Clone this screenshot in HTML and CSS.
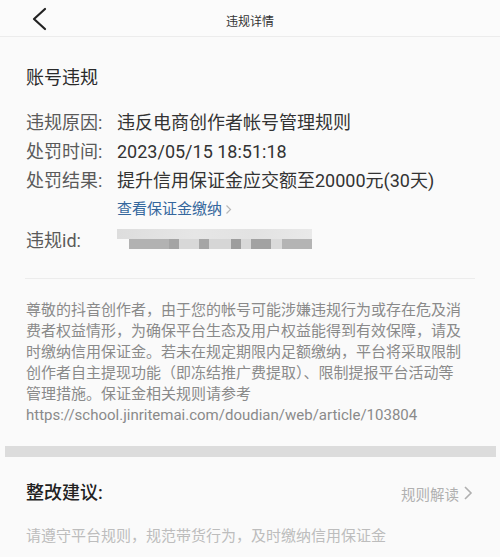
FILE: index.html
```html
<!DOCTYPE html>
<html lang="zh-CN">
<head>
<meta charset="utf-8">
<title>违规详情</title>
<link rel="stylesheet" href="styles.css">
</head>
<body>
<header class="topbar">
  <div class="back">
    <svg width="16" height="24" viewBox="0 0 16 24"><polyline points="13,2 2,12 13,22" fill="none" stroke="#222" stroke-width="2.2" stroke-linecap="round" stroke-linejoin="round"/></svg>
  </div>
  <div class="topbar-title">违规详情</div>
  <div></div>
</header>

<section class="violation">
  <h1 class="sec-title">账号违规</h1>
  <div class="rows">
    <div class="label">违规原因:</div>
    <div class="value">违反电商创作者帐号管理规则</div>
    <div class="label">处罚时间:</div>
    <div class="value">2023/05/15 18:51:18</div>
    <div class="label">处罚结果:</div>
    <div class="value">提升信用保证金应交额至20000元(30天)</div>
    <div></div>
    <div class="link">查看保证金缴纳 <svg width="7" height="11" viewBox="0 0 7 11"><polyline points="1.5,1.5 5.5,5.5 1.5,9.5" fill="none" stroke="#b8b8b8" stroke-width="1.2"/></svg></div>
    <div class="label id-label">违规id:</div>
    <div class="value id-value"><div class="blur"></div></div>
  </div>
  <div class="divider"></div>
  <p class="notice">尊敬的抖音创作者，由于您的帐号可能涉嫌违规行为或存在危及消<br>费者权益情形，为确保平台生态及用户权益能得到有效保障，请及<br>时缴纳信用保证金。若未在规定期限内足额缴纳，平台将采取限制<br>创作者自主提现功能（即冻结推广费提取）、限制提报平台活动等<br>管理措施。保证金相关规则请参考<br>https://school.jinritemai.com/doudian/web/article/103804</p>
</section>

<div class="band"></div>

<section class="advice">
  <div class="advice-head">
    <h2 class="advice-title">整改建议:</h2>
    <div class="rule-link">规则解读 <svg width="10" height="16" viewBox="0 0 10 16"><polyline points="2,2 8,8 2,14" fill="none" stroke="#b0b0b0" stroke-width="1.6"/></svg></div>
  </div>
  <p class="advice-text">请遵守平台规则，规范带货行为，及时缴纳信用保证金</p>
</section>
</body>
</html>
```

FILE: styles.css
```css
html, body {
  margin: 0;
  padding: 0;
  background: #fafafa;
}
body {
  font-family: Roboto, "Noto Sans CJK SC", "Noto Sans", sans-serif;
  color: #333;
  width: 500px;
  height: 557px;
  overflow: hidden;
}
.topbar {
  height: 36px;
  border-bottom: 1px solid #ececec;
  display: grid;
  grid-template-columns: 1fr auto 1fr;
  align-items: center;
  background: #fbfbfb;
}
.back {
  padding-left: 32px;
  display: flex;
  align-items: center;
  padding-top: 1px;
}
.topbar-title {
  font-size: 12px;
  color: #333;
  padding-top: 5px;
}
.violation {
  padding: 0 25px;
}
.sec-title {
  margin: 28px 0 0 1px;
  font-size: 18px;
  line-height: 26px;
  font-weight: 400;
  color: #2a2a2a;
}
.rows {
  margin-top: 17px;
  display: grid;
  grid-template-columns: 92px 1fr;
  line-height: 29px;
}
.label {
  font-size: 18px;
  color: #5a5a5a;
  padding-left: 1px;
}
.value {
  font-size: 18px;
  color: #333;
}
.link {
  font-size: 15px;
  color: #35679d;
  display: flex;
  align-items: center;
  gap: 3px;
}
.id-label, .id-value {
  margin-top: 2px;
}
.id-value {
  display: flex;
  align-items: center;
}
.blur {
  width: 195px;
  height: 20px;
  margin-top: -4px;
  background:
    linear-gradient(to right,
      transparent 0, transparent 12px,
      #b2b2b2 12px, #b2b2b2 52px,
      #a4a4a4 52px, #a4a4a4 62px,
      #d8d8d8 62px, #d8d8d8 82px,
      #a6a6a6 82px, #a6a6a6 92px,
      #d6d6d6 92px, #d6d6d6 114px,
      #9d9d9d 114px, #9d9d9d 124px,
      #d8d8d8 124px, #d8d8d8 134px,
      #a2a2a2 134px, #a2a2a2 154px,
      #dadada 154px, #dadada 165px,
      #b4b4b4 165px, #b4b4b4 195px) bottom / 100% 10px no-repeat,
    linear-gradient(to right, #dddddd, #e6e6e6 40%, #e2e2e2 70%, #e9e9e9) top / 100% 10px no-repeat;
}
.divider {
  margin-top: 23px;
  height: 1px;
  background: #ececec;
}
.notice {
  margin: 21px 0 0 1px;
  font-size: 15px;
  line-height: 21px;
  color: #8a8a8a;
  white-space: nowrap;
}
.band {
  margin: 20px 4px 0 5px;
  height: 11px;
  background: #dcdcdc;
}
.advice {
  padding: 0 27px 0 25px;
}
.advice-head {
  margin-top: 23px;
  display: flex;
  justify-content: space-between;
  align-items: center;
}
.advice-title {
  margin: 0 0 0 1px;
  font-size: 18px;
  line-height: 26px;
  font-weight: 500;
  color: #222;
}
.rule-link {
  font-size: 14.5px;
  color: #b0b0b0;
  display: flex;
  align-items: center;
  gap: 4px;
}
.advice-text {
  margin: 20px 0 0 1px;
  font-size: 15px;
  line-height: 21px;
  color: #bdbdbd;
}
```
